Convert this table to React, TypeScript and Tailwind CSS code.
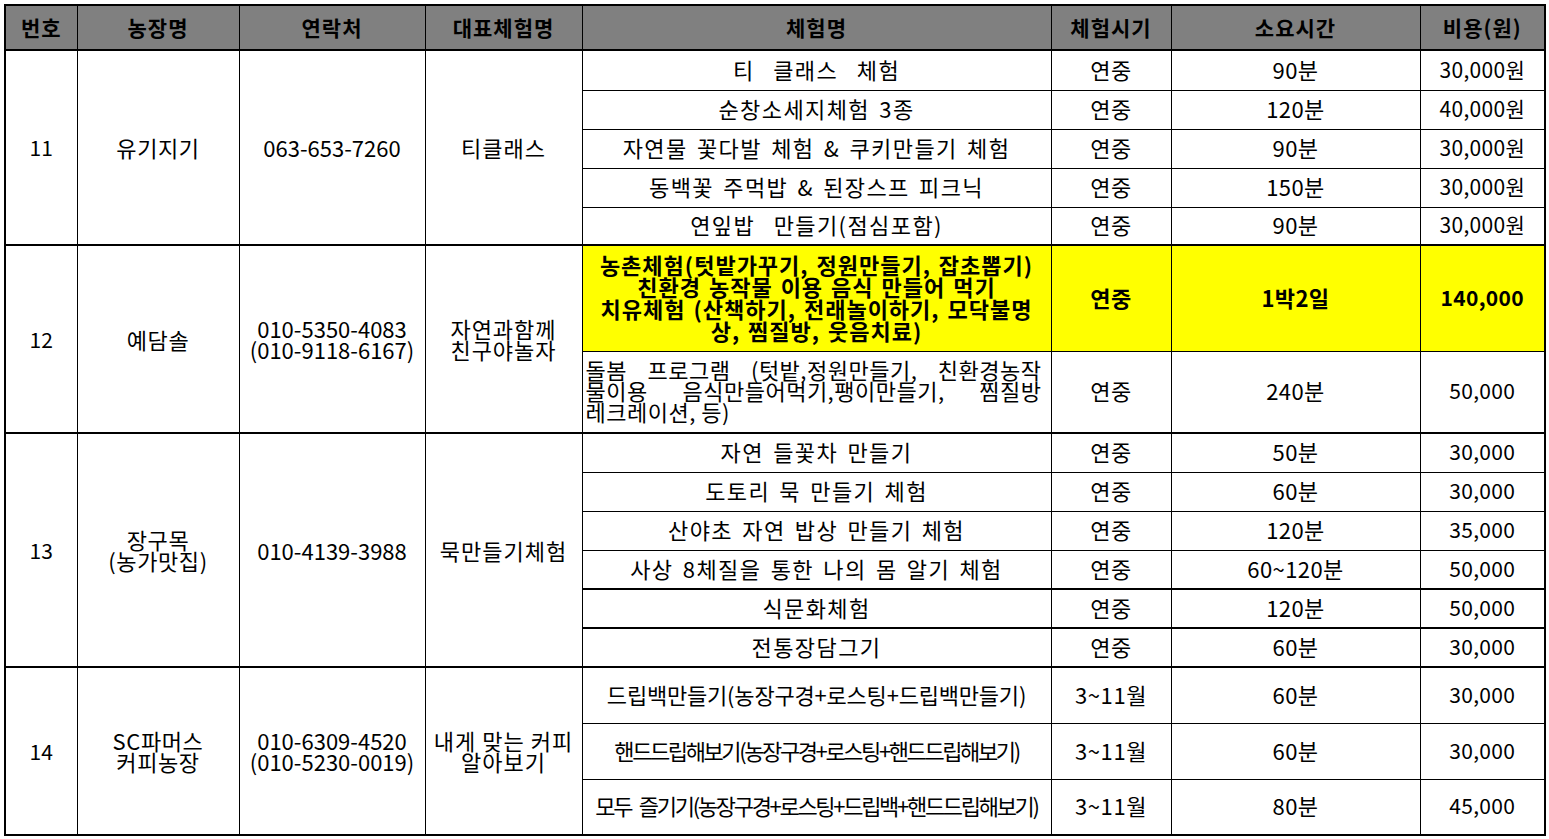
import React from 'react';

type Item = {
  name: React.ReactNode;
  season: string;
  time: string;
  cost: string;
  h: number;
  hl?: boolean;
  thick?: boolean;
  cls?: string;
};

type Group = {
  no: string;
  farm: string[];
  contact: string[];
  rep: string[];
  items: Item[];
};

const spaced = 'tracking-[1.4px] [word-spacing:3px]';

const groups: Group[] = [
  {
    no: '11',
    farm: ['유기지기'],
    contact: ['063-653-7260'],
    rep: ['티클래스'],
    items: [
      { name: '티  클래스  체험', season: '연중', time: '90분', cost: '30,000원', h: 40, cls: spaced },
      { name: '순창소세지체험 3종', season: '연중', time: '120분', cost: '40,000원', h: 39, cls: spaced },
      { name: '자연물 꽃다발 체험 & 쿠키만들기 체험', season: '연중', time: '90분', cost: '30,000원', h: 39, cls: spaced },
      { name: '동백꽃 주먹밥 & 된장스프 피크닉', season: '연중', time: '150분', cost: '30,000원', h: 39, cls: spaced },
      { name: '연잎밥  만들기(점심포함)', season: '연중', time: '90분', cost: '30,000원', h: 38, cls: spaced },
    ],
  },
  {
    no: '12',
    farm: ['예담솔'],
    contact: ['010-5350-4083', '(010-9118-6167)'],
    rep: ['자연과함께', '친구야놀자'],
    items: [
      {
        name: (
          <>
            농촌체험(텃밭가꾸기, 정원만들기, 잡초뽑기)
            <br />
            친환경 농작물 이용 음식 만들어 먹기
            <br />
            치유체험 (산책하기, 전래놀이하기, 모닥불명
            <br />
            상, 찜질방, 웃음치료)
          </>
        ),
        season: '연중',
        time: '1박2일',
        cost: '140,000',
        h: 106,
        hl: true,
        thick: true,
        cls: 'tracking-[1px] [word-spacing:2px] leading-[22px]',
      },
      {
        name: (
          <div className="text-left">
            <div className="[text-align-last:justify]">돌봄 프로그램 (텃밭,정원만들기, 친환경농작</div>
            <div className="[text-align-last:justify]">물이용 음식만들어먹기,팽이만들기, 찜질방</div>
            <div>레크레이션, 등)</div>
          </div>
        ),
        season: '연중',
        time: '240분',
        cost: '50,000',
        h: 82,
        cls: 'tracking-[0.5px] pl-[3px] pr-[9px]',
      },
    ],
  },
  {
    no: '13',
    farm: ['장구목', '(농가맛집)'],
    contact: ['010-4139-3988'],
    rep: ['묵만들기체험'],
    items: [
      { name: '자연 들꽃차 만들기', season: '연중', time: '50분', cost: '30,000', h: 39, thick: true, cls: spaced },
      { name: '도토리 묵 만들기 체험', season: '연중', time: '60분', cost: '30,000', h: 39, cls: spaced },
      { name: '산야초 자연 밥상 만들기 체험', season: '연중', time: '120분', cost: '35,000', h: 39, cls: spaced },
      { name: '사상 8체질을 통한 나의 몸 알기 체험', season: '연중', time: '60~120분', cost: '50,000', h: 39, cls: spaced },
      { name: '식문화체험', season: '연중', time: '120분', cost: '50,000', h: 39, thick: true, cls: spaced },
      { name: '전통장담그기', season: '연중', time: '60분', cost: '30,000', h: 39, thick: true, cls: spaced },
    ],
  },
  {
    no: '14',
    farm: ['SC파머스', '커피농장'],
    contact: ['010-6309-4520', '(010-5230-0019)'],
    rep: ['내게 맞는 커피', '알아보기'],
    items: [
      { name: '드립백만들기(농장구경+로스팅+드립백만들기)', season: '3~11월', time: '60분', cost: '30,000', h: 56, thick: true, cls: 'tracking-[-0.2px]' },
      { name: '핸드드립해보기(농장구경+로스팅+핸드드립해보기)', season: '3~11월', time: '60분', cost: '30,000', h: 56, cls: 'tracking-[-2.4px]' },
      { name: '모두 즐기기(농장구경+로스팅+드립백+핸드드립해보기)', season: '3~11월', time: '80분', cost: '45,000', h: 56, cls: 'tracking-[-2.3px] [word-spacing:5px]' },
    ],
  },
];

const headers = ['번호', '농장명', '연락처', '대표체험명', '체험명', '체험시기', '소요시간', '비용(원)'];
const widths = ['w-[72px]', 'w-[162px]', 'w-[186px]', 'w-[157px]', 'w-[469px]', 'w-[120px]', 'w-[249px]', 'w-[125px]'];

function Lines({ lines }: { lines: string[] }) {
  return (
    <>
      {lines.map((l) => (
        <div key={l}>{l}</div>
      ))}
    </>
  );
}

export default function App() {
  return (
    <div
      className="bg-white min-h-screen pt-[4px] pl-[4px] text-black"
      style={{ fontFamily: '"Noto Sans CJK KR", "Noto Sans", sans-serif' }}
    >
      <table className="border-collapse table-fixed w-[1542px] border-2 border-black text-[22px] leading-[21px]">
        <colgroup>
          {widths.map((w, i) => (
            <col key={i} className={w} />
          ))}
        </colgroup>
        <thead>
          <tr className="h-[45px] bg-[#808080] text-[21px] tracking-[1px]">
            {headers.map((h) => (
              <th key={h} className="border border-black border-b-2 font-bold text-center p-0">
                {h}
              </th>
            ))}
          </tr>
        </thead>
        <tbody>
          {groups.map((g) =>
            g.items.map((it, i) => {
              const top = it.thick || i === 0 ? 'border-t-2' : '';
              const cell = `border border-black text-center align-middle p-0 ${top}`;
              const right = `${cell} pb-[2px] ${it.hl ? 'bg-[#ffff00] font-bold' : ''}`;
              return (
                <tr key={g.no + i} style={{ height: it.h }}>
                  {i === 0 && (
                    <>
                      <td rowSpan={g.items.length} className={`${cell} border-t-2 text-[21px]`}>
                        {g.no}
                      </td>
                      <td rowSpan={g.items.length} className={`${cell} border-t-2 tracking-[0.6px]`}>
                        <Lines lines={g.farm} />
                      </td>
                      <td rowSpan={g.items.length} className={`${cell} border-t-2`}>
                        <Lines lines={g.contact} />
                      </td>
                      <td rowSpan={g.items.length} className={`${cell} border-t-2 tracking-[1px]`}>
                        <Lines lines={g.rep} />
                      </td>
                    </>
                  )}
                  <td className={`${right} whitespace-pre ${it.cls ?? ''}`}>{it.name}</td>
                  <td className={`${right} tracking-[0.6px]`}>{it.season}</td>
                  <td className={`${right} tracking-[0.4px]`}>{it.time}</td>
                  <td className={`${right} text-[21px] tracking-[0.3px]`}>{it.cost}</td>
                </tr>
              );
            })
          )}
        </tbody>
      </table>
    </div>
  );
}
